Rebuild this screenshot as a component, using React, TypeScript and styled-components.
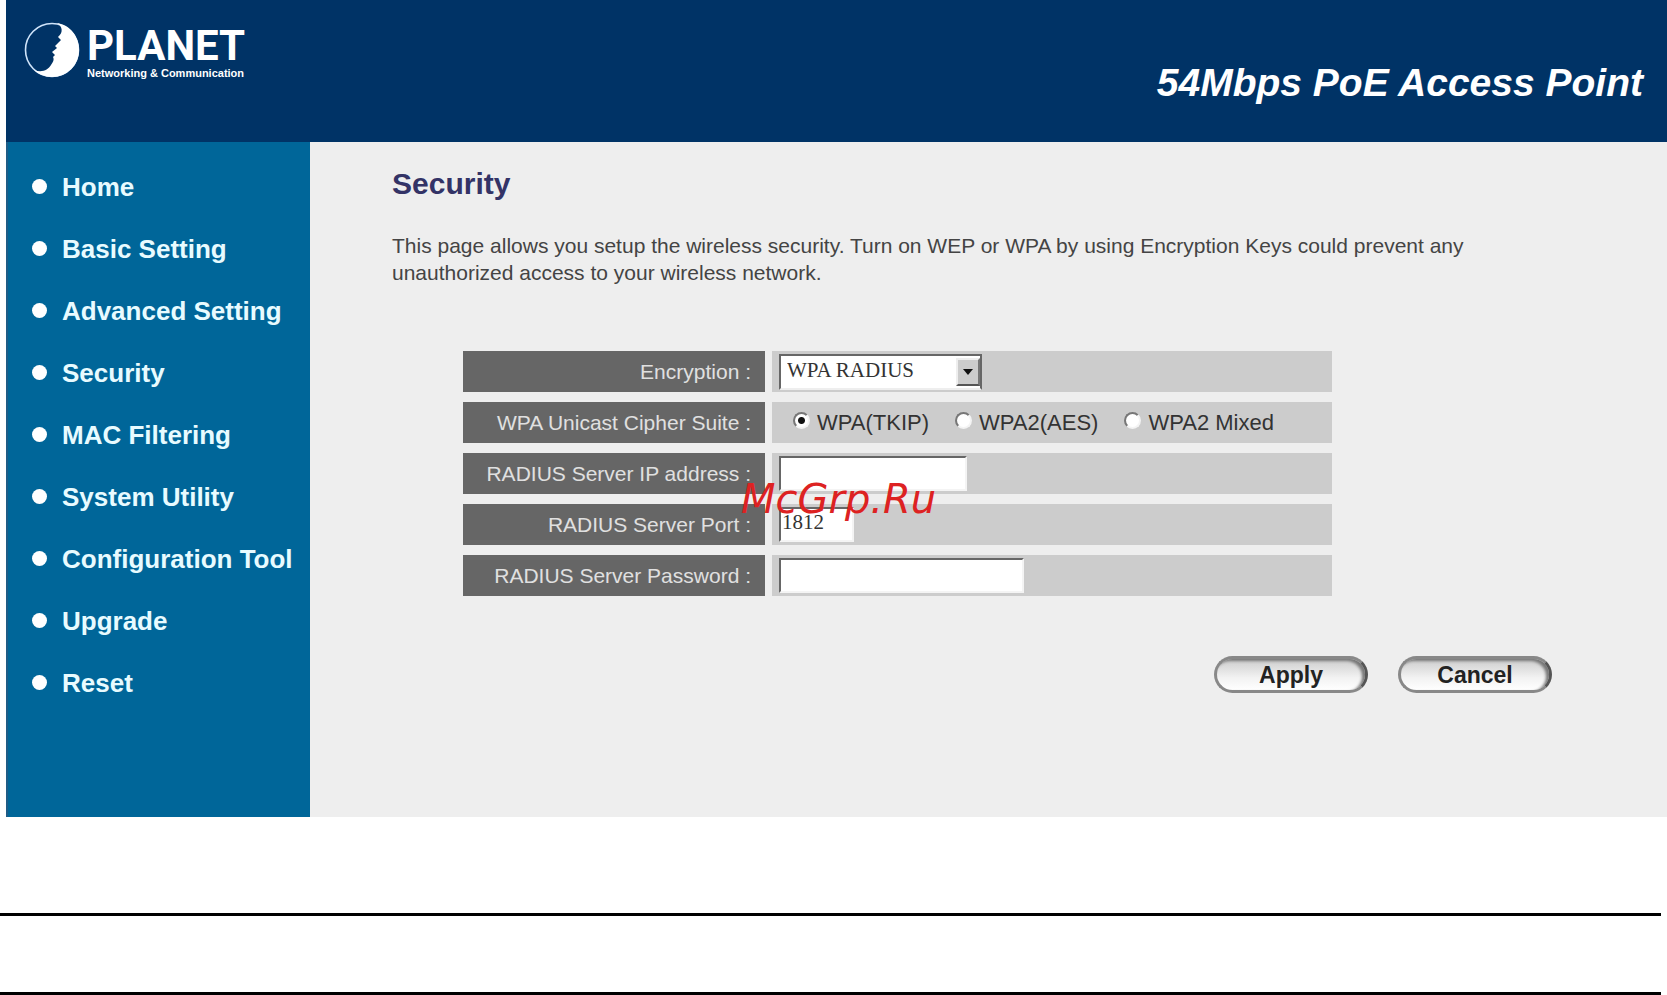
import React from "react";
import styled, { createGlobalStyle } from "styled-components";

const GlobalStyle = createGlobalStyle`
  *, *::before, *::after { box-sizing: border-box; }
  body {
    margin: 0;
    background: #ffffff;
    font-family: "Liberation Sans", Arial, sans-serif;
  }
`;

const Device = styled.div`
  margin-left: 6px;
  display: grid;
  grid-template-columns: 304px 1fr;
  grid-template-rows: 142px auto;
`;

const Header = styled.header`
  grid-column: 1 / -1;
  display: flex;
  justify-content: space-between;
  align-items: flex-start;
  padding: 22px 24px 0 18px;
  background: #003366;
  color: #ffffff;
`;

const Brand = styled.a`
  display: flex;
  gap: 7px;
  color: inherit;
  text-decoration: none;
`;

const BrandText = styled.span`
  display: flex;
  flex-direction: column;
  padding-top: 4px;
`;

const BrandName = styled.span`
  font-family: Roboto, "Liberation Sans", sans-serif;
  font-weight: 700;
  font-size: 42px;
  line-height: 40px;
`;

const Tagline = styled.span`
  font-weight: 700;
  font-size: 11px;
  line-height: 14px;
  white-space: nowrap;
`;

const ProductName = styled.p`
  margin: 0;
  padding-top: 39px;
  font-size: 39px;
  line-height: 44px;
  font-style: italic;
  font-weight: 700;
`;

const Sidebar = styled.nav`
  padding: 14px 0 103px 24px;
  background: #006699;
  border-left: 2px solid #1f5c86;
`;

const Menu = styled.ul`
  margin: 0;
  padding: 0;
  list-style: none;
`;

const MenuLink = styled.a`
  display: flex;
  align-items: center;
  gap: 15px;
  height: 62px;
  color: #e8fbff;
  font-size: 26px;
  font-weight: 700;
  text-decoration: none;
  white-space: nowrap;

  &::before {
    content: "";
    width: 15px;
    height: 15px;
    margin-bottom: 2px;
    border-radius: 50%;
    background: #ffffff;
  }
`;

const Content = styled.main`
  padding: 24px 115px 0 82px;
  background: #eeeeee;
`;

const Title = styled.h1`
  margin: 0;
  color: #333366;
  font-size: 30px;
  line-height: 36px;
`;

const Intro = styled.p`
  max-width: 1120px;
  margin: 30px 0 0;
  color: #444444;
  font-size: 21px;
  line-height: 27px;
`;

const Settings = styled.form`
  margin-top: 65px;
`;

const Rows = styled.div`
  display: flex;
  flex-direction: column;
  gap: 10px;
  max-width: 940px;
  padding-left: 71px;
`;

const Row = styled.div`
  display: grid;
  grid-template-columns: 302px 1fr;
  column-gap: 7px;
  height: 41px;
`;

const RowLabel = styled.label`
  padding-right: 14px;
  background: #666666;
  color: #e0e0e0;
  font-size: 21px;
  line-height: 41px;
  text-align: right;
  white-space: nowrap;
`;

const RowValue = styled.div`
  display: flex;
  align-items: center;
  padding-left: 7px;
  background: #cccccc;
`;

const SelectBox = styled.span`
  display: grid;
  align-items: center;
  width: 203px;
`;

const Select = styled.select`
  grid-area: 1 / 1;
  appearance: none;
  height: 36px;
  padding: 0 0 4px 6px;
  border: 2px solid;
  border-color: #666666 #666666 #eeeeee #666666;
  border-radius: 0;
  background: #ffffff;
  color: #333333;
  font-family: "Liberation Serif", serif;
  font-size: 21px;
`;

const SelectArrow = styled.span`
  grid-area: 1 / 1;
  justify-self: end;
  display: flex;
  align-items: center;
  justify-content: center;
  width: 24px;
  height: 28px;
  margin-right: 2px;
  border: 2px solid;
  border-color: #eeeeee #777777 #555555 #eeeeee;
  background: #cccccc;
  pointer-events: none;
`;

const TextBox = styled.input<{ $width: number }>`
  width: ${(p) => p.$width}px;
  height: 35px;
  padding: 0 0 4px 1px;
  border: 2px solid;
  border-color: #666666 #f4f4f4 #f4f4f4 #666666;
  border-radius: 0;
  background: #ffffff;
  color: #333333;
  font-family: "Liberation Serif", serif;
  font-size: 21px;
`;

const Choices = styled.div`
  display: flex;
  gap: 26px;
  padding-left: 14px;
`;

const Choice = styled.label`
  display: flex;
  align-items: center;
  gap: 7px;
  color: #333333;
  font-size: 22px;
  line-height: 26px;
  white-space: nowrap;
`;

const Radio = styled.input`
  appearance: none;
  width: 17px;
  height: 17px;
  margin: 0 0 4px;
  border: 2px solid;
  border-color: #777777 #f4f4f4 #f4f4f4 #777777;
  border-radius: 50%;
  background: #ffffff;

  &:checked {
    background: radial-gradient(circle, #111111 0 3px, #ffffff 4px);
  }
`;

const Actions = styled.div`
  display: flex;
  justify-content: flex-end;
  gap: 30px;
  margin-top: 60px;
`;

const PillButton = styled.button`
  width: 154px;
  height: 37px;
  padding: 0;
  border: 3px solid;
  border-color: #888888 #555555 #888888 #888888;
  border-radius: 19px;
  background: linear-gradient(#cccccc, #f2f2f2 60%, #ffffff);
  box-shadow: inset -3px 2px 3px #777777;
  color: #222222;
  font-family: inherit;
  font-size: 23px;
  font-weight: 700;
  line-height: 28px;
`;

const PageRule = styled.hr<{ $space: number }>`
  height: 3px;
  margin: ${(p) => p.$space}px 6px 0 0;
  border: 0;
  background: #000000;
`;

const Watermark = styled.span`
  position: absolute;
  top: 475px;
  left: 741px;
  color: #dd2222;
  font-family: "DejaVu Sans", sans-serif;
  font-size: 40px;
  font-style: italic;
  line-height: 48px;
  pointer-events: none;
`;

const Page = styled.div`
  position: relative;
`;

const Globe = () => (
  <svg width="56" height="56" viewBox="0 0 56 56" aria-hidden="true">
    <circle cx="28" cy="28" r="26.5" fill="none" stroke="#cfe4fa" strokeWidth="1.6" />
    <path
      d="M33 1 C46 3 55 14 55 28 C55 43 43 55 28 55 C21 55 14 52 10 48 C18 51 24 48 27 43 C30 39 30 37 29 35 L31 33 L28 30 L33 26 L31 24 L37 18 L34 15 C40 10 38 4 33 1 Z"
      fill="#ffffff"
    />
  </svg>
);

const menuItems = [
  "Home",
  "Basic Setting",
  "Advanced Setting",
  "Security",
  "MAC Filtering",
  "System Utility",
  "Configuration Tool",
  "Upgrade",
  "Reset",
];

const ciphers = ["WPA(TKIP)", "WPA2(AES)", "WPA2 Mixed"];

export default function App() {
  return (
    <Page>
      <GlobalStyle />
      <Device>
        <Header>
          <Brand href="#home">
            <Globe />
            <BrandText>
              <BrandName>PLANET</BrandName>
              <Tagline>Networking &amp; Communication</Tagline>
            </BrandText>
          </Brand>
          <ProductName>54Mbps PoE Access Point</ProductName>
        </Header>
        <Sidebar>
          <Menu>
            {menuItems.map((item) => (
              <li key={item}>
                <MenuLink href="#">{item}</MenuLink>
              </li>
            ))}
          </Menu>
        </Sidebar>
        <Content>
          <Title>Security</Title>
          <Intro>
            This page allows you setup the wireless security. Turn on WEP or WPA by using
            Encryption Keys could prevent any unauthorized access to your wireless network.
          </Intro>
          <Settings onSubmit={(e) => e.preventDefault()}>
            <Rows>
              <Row>
                <RowLabel htmlFor="encryption">Encryption :</RowLabel>
                <RowValue>
                  <SelectBox>
                    <Select id="encryption" defaultValue="WPA RADIUS">
                      <option>WPA RADIUS</option>
                    </Select>
                    <SelectArrow>
                      <svg width="10" height="6" viewBox="0 0 10 6" aria-hidden="true">
                        <path d="M0 0H10L5 6Z" fill="#111111" />
                      </svg>
                    </SelectArrow>
                  </SelectBox>
                </RowValue>
              </Row>
              <Row>
                <RowLabel as="span" id="cipher">WPA Unicast Cipher Suite :</RowLabel>
                <RowValue>
                  <Choices role="radiogroup" aria-labelledby="cipher">
                    {ciphers.map((name, i) => (
                      <Choice key={name}>
                        <Radio type="radio" name="cipher" defaultChecked={i === 0} />
                        {name}
                      </Choice>
                    ))}
                  </Choices>
                </RowValue>
              </Row>
              <Row>
                <RowLabel htmlFor="server-ip">RADIUS Server IP address :</RowLabel>
                <RowValue>
                  <TextBox id="server-ip" type="text" $width={188} />
                </RowValue>
              </Row>
              <Row>
                <RowLabel htmlFor="server-port">RADIUS Server Port :</RowLabel>
                <RowValue>
                  <TextBox id="server-port" type="text" defaultValue="1812" $width={75} />
                </RowValue>
              </Row>
              <Row>
                <RowLabel htmlFor="server-password">RADIUS Server Password :</RowLabel>
                <RowValue>
                  <TextBox id="server-password" type="password" $width={245} />
                </RowValue>
              </Row>
            </Rows>
            <Actions>
              <PillButton type="submit">Apply</PillButton>
              <PillButton type="reset">Cancel</PillButton>
            </Actions>
          </Settings>
        </Content>
      </Device>
      <PageRule $space={96} />
      <PageRule $space={76} />
      <Watermark>McGrp.Ru</Watermark>
    </Page>
  );
}
